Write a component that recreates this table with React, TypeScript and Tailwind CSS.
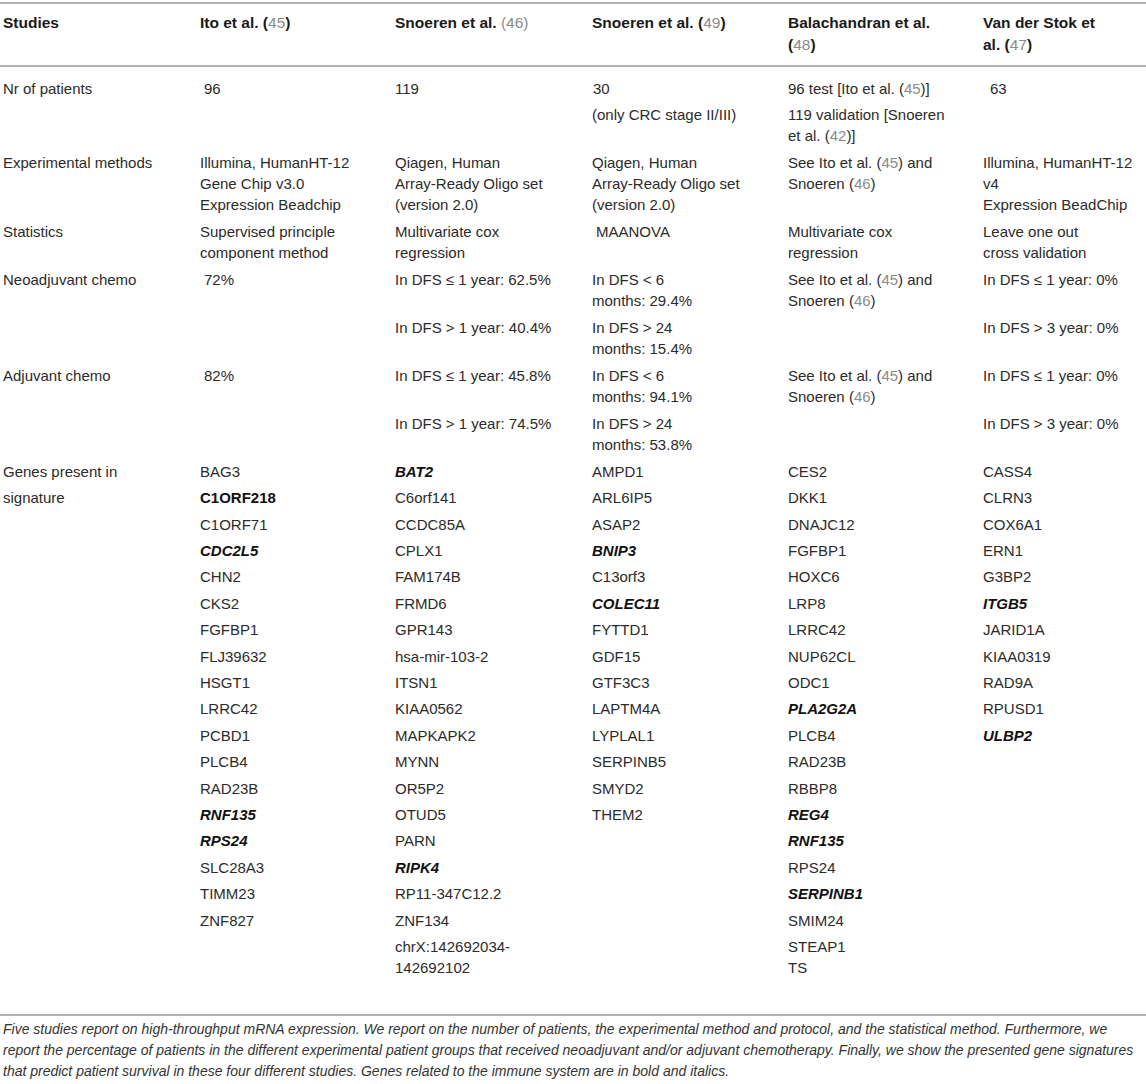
import React from 'react'

// one cell = list of paragraphs, one paragraph = list of lines
type Line = React.ReactNode
type Para = Line[]

const Ref = ({ n }: { n: string }) => <span className="text-[#8a8a8a] font-normal">{n}</span>

const seeIto: Para = [
  <>See Ito et al. (<Ref n="45" />) and</>,
  <>Snoeren (<Ref n="46" />)</>,
]

// "*" = bold italic, "^" = bold
const genes: string[][] = [
  ['BAG3', '^C1ORF218', 'C1ORF71', '*CDC2L5', 'CHN2', 'CKS2', 'FGFBP1', 'FLJ39632', 'HSGT1', 'LRRC42', 'PCBD1', 'PLCB4', 'RAD23B', '*RNF135', '*RPS24', 'SLC28A3', 'TIMM23', 'ZNF827'],
  ['*BAT2', 'C6orf141', 'CCDC85A', 'CPLX1', 'FAM174B', 'FRMD6', 'GPR143', 'hsa-mir-103-2', 'ITSN1', 'KIAA0562', 'MAPKAPK2', 'MYNN', 'OR5P2', 'OTUD5', 'PARN', '*RIPK4', 'RP11-347C12.2', 'ZNF134', 'chrX:142692034-|142692102'],
  ['AMPD1', 'ARL6IP5', 'ASAP2', '*BNIP3', 'C13orf3', '*COLEC11', 'FYTTD1', 'GDF15', 'GTF3C3', 'LAPTM4A', 'LYPLAL1', 'SERPINB5', 'SMYD2', 'THEM2'],
  ['CES2', 'DKK1', 'DNAJC12', 'FGFBP1', 'HOXC6', 'LRP8', 'LRRC42', 'NUP62CL', 'ODC1', '*PLA2G2A', 'PLCB4', 'RAD23B', 'RBBP8', '*REG4', '*RNF135', 'RPS24', '*SERPINB1', 'SMIM24', 'STEAP1|TS'],
  ['CASS4', 'CLRN3', 'COX6A1', 'ERN1', 'G3BP2', '*ITGB5', 'JARID1A', 'KIAA0319', 'RAD9A', 'RPUSD1', '*ULBP2'],
]

function Gene({ g }: { g: string }) {
  if (g.startsWith('*')) return <span className="font-bold italic text-[#111]">{g.slice(1)}</span>
  if (g.startsWith('^')) return <span className="font-bold text-[#111]">{g.slice(1)}</span>
  const parts = g.split('|')
  return (
    <>
      {parts.map((p, i) => (
        <React.Fragment key={i}>
          {i > 0 && <br />}
          {p}
        </React.Fragment>
      ))}
    </>
  )
}

function Cell({ paras, indent = '', rowSpan, pad = 'pt-[3px] pb-[3px]' }: { paras: Para[]; indent?: string; rowSpan?: number; pad?: string }) {
  return (
    <td rowSpan={rowSpan} className={`align-top pl-[3px] pr-1 ${pad}`}>
      <div className={`flex flex-col gap-[5.4px] ${indent}`}>
        {paras.map((para, i) => (
          <div key={i} className="leading-[21px] whitespace-nowrap">
            {para.map((line, j) => (
              <React.Fragment key={j}>
                {j > 0 && <br />}
                {line}
              </React.Fragment>
            ))}
          </div>
        ))}
      </div>
    </td>
  )
}

export default function App() {
  const first = 'pt-[10.5px] pb-[3px]'
  return (
    <div className="w-[1146px] h-[1084px] bg-white pt-[2px] font-['Liberation_Sans',Arial,sans-serif] text-[#2b2b2b]">
      <table className="w-full table-fixed border-collapse text-[15px]">
        <colgroup>
          <col className="w-[197px]" />
          <col className="w-[195px]" />
          <col className="w-[197px]" />
          <col className="w-[196px]" />
          <col className="w-[195px]" />
          <col />
        </colgroup>
        <thead>
          <tr className="border-t-2 border-b-2 border-[#b3b3b3] text-left text-[15.5px] font-bold text-[#1a1a1a]">
            <th className="align-top pl-[3px] pt-[8px] pb-[9px] leading-[22px]">Studies</th>
            <th className="align-top pl-[3px] pt-[8px] pb-[9px] leading-[22px]">Ito et al. (<Ref n="45" />)</th>
            <th className="align-top pl-[3px] pt-[8px] pb-[9px] leading-[22px]">Snoeren et al. <Ref n="(46)" /></th>
            <th className="align-top pl-[3px] pt-[8px] pb-[9px] leading-[22px]">Snoeren et al. (<Ref n="49" />)</th>
            <th className="align-top pl-[3px] pt-[8px] pb-[9px] leading-[22px]">Balachandran et al.<br />(<Ref n="48" />)</th>
            <th className="align-top pl-[3px] pt-[8px] pb-[9px] leading-[22px]">Van der Stok et<br />al. (<Ref n="47" />)</th>
          </tr>
        </thead>
        <tbody>
          <tr>
            <Cell pad={first} paras={[['Nr of patients']]} />
            <Cell pad={first} indent="pl-[4px]" paras={[['96']]} />
            <Cell pad={first} paras={[['119']]} />
            <Cell pad={first} paras={[[<span className="pl-[1px]">30</span>], ['(only CRC stage II/III)']]} />
            <Cell
              pad={first}
              paras={[
                [<>96 test [Ito et al. (<Ref n="45" />)]</>],
                ['119 validation [Snoeren', <>et al. (<Ref n="42" />)]</>],
              ]}
            />
            <Cell pad={first} indent="pl-[7px]" paras={[['63']]} />
          </tr>
          <tr>
            <Cell paras={[['Experimental methods']]} />
            <Cell paras={[['Illumina, HumanHT-12', 'Gene Chip v3.0', 'Expression Beadchip']]} />
            <Cell paras={[['Qiagen, Human', 'Array-Ready Oligo set', '(version 2.0)']]} />
            <Cell paras={[['Qiagen, Human', 'Array-Ready Oligo set', '(version 2.0)']]} />
            <Cell paras={[seeIto]} />
            <Cell paras={[['Illumina, HumanHT-12', 'v4', 'Expression BeadChip']]} />
          </tr>
          <tr>
            <Cell paras={[['Statistics']]} />
            <Cell paras={[['Supervised principle', 'component method']]} />
            <Cell paras={[['Multivariate cox', 'regression']]} />
            <Cell indent="pl-[4px]" paras={[['MAANOVA']]} />
            <Cell paras={[['Multivariate cox', 'regression']]} />
            <Cell paras={[['Leave one out', 'cross validation']]} />
          </tr>
          <tr>
            <Cell rowSpan={2} paras={[['Neoadjuvant chemo']]} />
            <Cell rowSpan={2} indent="pl-[4px]" paras={[['72%']]} />
            <Cell paras={[['In DFS ≤ 1 year: 62.5%']]} />
            <Cell paras={[['In DFS < 6', 'months: 29.4%']]} />
            <Cell paras={[seeIto]} />
            <Cell paras={[['In DFS ≤ 1 year: 0%']]} />
          </tr>
          <tr>
            <Cell paras={[['In DFS > 1 year: 40.4%']]} />
            <Cell paras={[['In DFS > 24', 'months: 15.4%']]} />
            <Cell paras={[]} />
            <Cell paras={[['In DFS > 3 year: 0%']]} />
          </tr>
          <tr>
            <Cell rowSpan={2} paras={[['Adjuvant chemo']]} />
            <Cell rowSpan={2} indent="pl-[4px]" paras={[['82%']]} />
            <Cell paras={[['In DFS ≤ 1 year: 45.8%']]} />
            <Cell paras={[['In DFS < 6', 'months: 94.1%']]} />
            <Cell paras={[seeIto]} />
            <Cell paras={[['In DFS ≤ 1 year: 0%']]} />
          </tr>
          <tr>
            <Cell paras={[['In DFS > 1 year: 74.5%']]} />
            <Cell paras={[['In DFS > 24', 'months: 53.8%']]} />
            <Cell paras={[]} />
            <Cell paras={[['In DFS > 3 year: 0%']]} />
          </tr>
          <tr className="border-b-2 border-[#b3b3b3]">
            <Cell pad="pt-[3px] pb-[36px]" paras={[['Genes present in'], ['signature']]} />
            {genes.map((list, i) => (
              <Cell key={i} pad="pt-[3px] pb-[36px]" paras={list.map((g) => [<Gene g={g} />])} />
            ))}
          </tr>
        </tbody>
      </table>
      <p className="pl-[3px] pt-[3px] text-[14px] leading-[21px] italic text-[#333] whitespace-nowrap">
        Five studies report on high-throughput mRNA expression. We report on the number of patients, the experimental method and protocol, and the statistical method. Furthermore, we
        <br />
        report the percentage of patients in the different experimental patient groups that received neoadjuvant and/or adjuvant chemotherapy. Finally, we show the presented gene signatures
        <br />
        that predict patient survival in these four different studies. Genes related to the immune system are in bold and italics.
      </p>
    </div>
  )
}
